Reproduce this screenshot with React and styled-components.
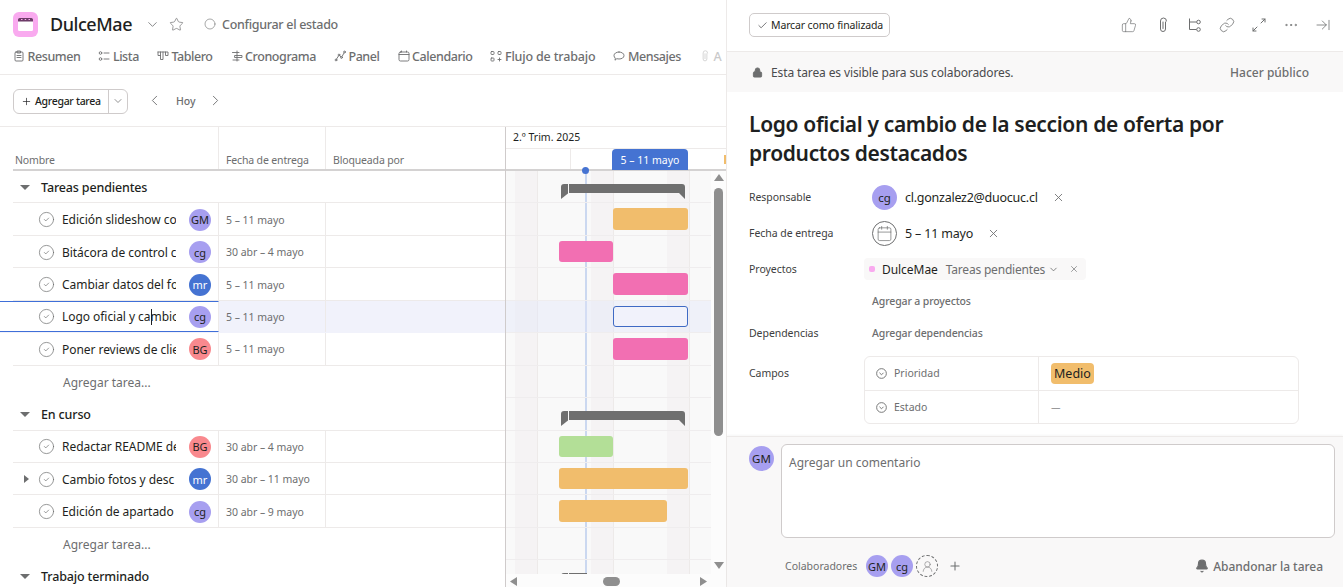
import React from "react"
import styled, { createGlobalStyle } from "styled-components"
import {
  Bell, Calendar, Check, ChevronDown, ChevronLeft, ChevronRight, CircleCheck, Ellipsis,
  Link, Lock, Plus, Star, ThumbsUp, UserRound, X, ArrowRightToLine, Circle,
} from "lucide-react"

const GlobalStyle = createGlobalStyle`
  html, body { margin: 0; padding: 0; height: 100%; overflow: hidden; background: #fff; }
  body { font-family: "Noto Sans", "Open Sans", sans-serif; color: #1e1f21; }
  * { box-sizing: border-box; }
`

const ROW = 32.45
const muted = "#6d6e6f"
const line = "#edeae9"
const orange = "#f1bd6c"
const pink = "#f26fb2"
const green = "#b3df97"
const blue = "#4573d2"

const Page = styled.div`
  display: flex;
  width: 1343px;
  height: 587px;
  overflow: hidden;
`
const LeftPane = styled.div`
  width: 727px;
  flex: none;
  display: flex;
  flex-direction: column;
  border-right: 1px solid ${line};
  overflow: hidden;
`
const Header = styled.header`
  height: 75px;
  flex: none;
  border-bottom: 1px solid ${line};
  padding: 11px 0 0 13px;
`
const TitleRow = styled.div`
  display: flex;
  align-items: center;
  height: 26px;
`
const Logo = styled.div`
  width: 25px;
  height: 25px;
  border-radius: 6px;
  background: #f9aaef;
  display: flex;
  align-items: center;
  justify-content: center;
  margin-right: 12px;
`
const ProjectName = styled.h1`
  margin: 0 13px 0 0;
  font-size: 18px;
  font-weight: 500;
  letter-spacing: -0.45px;
  width: 82px;
  white-space: nowrap;
`
const HeadIcon = styled.span`
  display: flex;
  color: ${muted};
  margin-right: ${(p) => p.$gap}px;
`
const StatusText = styled.span`
  font-size: 12.5px;
  font-weight: 500;
  letter-spacing: -0.3px;
  color: ${muted};
`
const Tabs = styled.nav`
  display: flex;
  gap: 18px;
  margin-top: 7px;
  height: 24px;
  align-items: center;
  white-space: nowrap;
`
const Tab = styled.span`
  display: flex;
  align-items: center;
  gap: 2.5px;
  font-size: 12.5px;
  font-weight: 500;
  letter-spacing: ${(p) => (p.$wide ? -0.17 : -0.42)}px;
  color: ${(p) => (p.$faded ? "#c9c9ca" : muted)};
  svg { flex: none; }
`
const Toolbar = styled.div`
  height: 52px;
  flex: none;
  border-bottom: 1px solid ${line};
  display: flex;
  align-items: center;
  padding: 0 0 0 13px;
`
const SplitButton = styled.div`
  display: flex;
  height: 25px;
  width: 115px;
  border: 1px solid #cfcbcb;
  border-radius: 6px;
  margin-right: 18px;
  margin-top: 1px;
`
const SplitMain = styled.div`
  width: 95px;
  display: flex;
  align-items: center;
  gap: 3px;
  padding-left: 7px;
  font-size: 10.5px;
  font-weight: 500;
  letter-spacing: -0.3px;
  white-space: nowrap;
  border-right: 1px solid #cfcbcb;
`
const SplitSide = styled.div`
  flex: 1;
  display: flex;
  align-items: center;
  justify-content: center;
  color: ${muted};
`
const TodayText = styled.span`
  font-size: 10.5px;
  font-weight: 500;
  color: ${muted};
  margin: 0 11px 0 13px;
`
const Grid = styled.div`
  flex: 1;
  display: flex;
  min-height: 0;
`
const TablePane = styled.div`
  width: 506px;
  flex: none;
  border-right: 1px solid #cfcbcb;
  overflow: hidden;
`
const TableHead = styled.div`
  height: 44px;
  margin-left: 13px;
  display: grid;
  grid-template-columns: 206px 107px 1fr;
  border-bottom: 2px solid #d4d2d2;
`
const HeadCell = styled.div`
  padding: 0 0 2px ${(p) => p.$pad}px;
  display: flex;
  align-items: flex-end;
  font-size: 10.5px;
  letter-spacing: -0.15px;
  color: ${muted};
  border-right: ${(p) => (p.$last ? "none" : `1px solid ${line}`)};
`
const Section = styled.div`
  height: ${ROW}px;
  margin-left: 13px;
  display: flex;
  align-items: center;
  gap: 11px;
  padding: 1px 0 0 7px;
  font-size: 12.5px;
  font-weight: 500;
  letter-spacing: -0.15px;
  border-bottom: 1px solid ${(p) => (p.$open ? line : "transparent")};
`
const Caret = styled.span`
  width: 0;
  height: 0;
  border-left: 5px solid transparent;
  border-right: 5px solid transparent;
  border-top: 5px solid #6d6e6f;
`
const AddRow = styled.div`
  height: ${ROW}px;
  padding: 1px 0 0 63px;
  display: flex;
  align-items: center;
  font-size: 12px;
  color: ${muted};
`
const TaskRow = styled.div`
  height: ${ROW}px;
  display: grid;
  grid-template-columns: ${(p) => (p.$active ? 219 : 206)}px 107px 1fr;
  border-bottom: 1px solid ${(p) => (p.$active ? "transparent" : line)};
  margin-left: ${(p) => (p.$active ? 0 : 13)}px;
  ${(p) => (p.$active ? "background: #f1f2fb;" : "")}
`
const NameCell = styled.div`
  display: flex;
  align-items: center;
  position: relative;
  padding: 1px 0 0 ${(p) => (p.$active ? 38 : 25)}px;
  border-right: 1px solid ${line};
  ${(p) => (p.$active ? `background: #fff; border-top: 1px solid #3f6fd8; border-bottom: 1px solid #3f6fd8;` : "")}
`
const Expander = styled.span`
  position: absolute;
  left: 11px;
  top: 12px;
  width: 0;
  height: 0;
  border-top: 4.5px solid transparent;
  border-bottom: 4.5px solid transparent;
  border-left: 5px solid #6d6e6f;
`
const TaskName = styled.span`
  width: 114px;
  margin-left: 7px;
  font-size: 12px;
  letter-spacing: -0.05px;
  white-space: nowrap;
  overflow: hidden;
  flex: none;
  position: relative;
`
const TextCursor = styled.i`
  position: absolute;
  left: 89px;
  top: 1px;
  width: 1px;
  height: 16px;
  background: #1e1f21;
`
const Avatar = styled.span`
  width: ${(p) => p.$size}px;
  height: ${(p) => p.$size}px;
  flex: none;
  border-radius: 50%;
  display: flex;
  align-items: center;
  justify-content: center;
  font-size: ${(p) => p.$font}px;
  background: ${(p) => p.$bg};
  color: ${(p) => p.$fg};
`
const RowAvatar = styled(Avatar)`
  margin-left: 13px;
`
const DateCell = styled.div`
  display: flex;
  align-items: center;
  padding: 1px 0 0 7px;
  font-size: 10.5px;
  letter-spacing: -0.03px;
  color: ${muted};
  border-right: 1px solid ${line};
  white-space: nowrap;
`
const Gantt = styled.div`
  flex: 1;
  position: relative;
  overflow: hidden;
`
const GanttHead = styled.div`
  height: 44px;
  border-bottom: 2px solid #d4d2d2;
`
const Quarter = styled.div`
  height: 22px;
  padding: 3px 0 0 7px;
  font-size: 10.5px;
  color: #1e1f21;
  border-bottom: 1px solid ${line};
`
const Weeks = styled.div`
  height: 20px;
  position: relative;
`
const WeekTick = styled.i`
  position: absolute;
  left: 64px;
  top: 0;
  height: 100%;
  width: 1px;
  background: ${line};
`
const ThisWeek = styled.div`
  position: absolute;
  left: 106px;
  top: 0;
  width: 76px;
  height: 21px;
  border-radius: 4px 4px 0 0;
  background: ${blue};
  color: #fff;
  font-size: 10.5px;
  display: flex;
  align-items: center;
  justify-content: center;
`
const NextWeek = styled.i`
  position: absolute;
  left: 218px;
  top: 6px;
  width: 2px;
  height: 9px;
  background: ${orange};
`
const Canvas = styled.div`
  position: relative;
  width: 206px;
  height: 403px;
  overflow: hidden;
  background: #f9f9f9;
`
const Weekend = styled.i`
  position: absolute;
  top: 0;
  bottom: 0;
  left: ${(p) => p.$left}px;
  width: 23px;
  background: #f5f3f4;
  border-right: 1px solid ${line};
`
const TodayLine = styled.i`
  position: absolute;
  top: 0;
  bottom: 0;
  left: 79px;
  width: 2px;
  background: #cbd8f0;
`
const Lane = styled.div`
  position: relative;
  height: ${ROW}px;
  border-bottom: 1px solid #efedee;
  ${(p) => (p.$active ? "background: rgba(225, 229, 250, .4);" : "")}
`
const Bar = styled.div`
  position: absolute;
  left: ${(p) => p.$left}px;
  width: ${(p) => p.$width}px;
  top: 5px;
  height: 21.5px;
  border-radius: 3px;
  background: ${(p) => p.$color};
  ${(p) => (p.$outline ? `border: 1px solid #3f6ac4;` : "")}
`
const Bracket = styled.svg`
  position: absolute;
  left: 55px;
  top: 13px;
`
const TodayDot = styled.i`
  position: absolute;
  left: 76px;
  top: 40px;
  width: 7px;
  height: 7px;
  border-radius: 50%;
  background: ${blue};
`
const VScroll = styled.div`
  position: absolute;
  right: 0;
  top: 44px;
  bottom: 0;
  width: 15px;
  background: #fcfcfc;
`
const HScroll = styled.div`
  position: absolute;
  left: 0;
  right: 0;
  bottom: 0;
  height: 13px;
  background: #fcfcfc;
`
const VThumb = styled.i`
  position: absolute;
  left: 3px;
  top: 17px;
  width: 9px;
  height: 248px;
  border-radius: 5px;
  background: #8f8f8f;
`
const HThumb = styled.i`
  position: absolute;
  left: 97px;
  top: 3px;
  width: 17px;
  height: 9px;
  border-radius: 5px;
  background: #8f8f8f;
`
const Arrow = styled.svg`
  position: absolute;
  left: ${(p) => p.$x}px;
  top: ${(p) => p.$y}px;
  fill: #8f8f8f;
`

const RightPane = styled.aside`
  flex: 1;
  display: flex;
  flex-direction: column;
  min-width: 0;
`
const TaskBar = styled.div`
  height: 52px;
  flex: none;
  display: flex;
  align-items: center;
  padding: 0 12px 1px 22px;
  border-bottom: 1px solid ${line};
`
const DoneButton = styled.div`
  width: 141px;
  height: 24px;
  border: 1px solid #cfcbcb;
  border-radius: 5px;
  display: flex;
  align-items: center;
  gap: 3px;
  padding-left: 7px;
  font-size: 10.5px;
  letter-spacing: -0.14px;
  white-space: nowrap;
  margin-right: auto;
`
const ActionIcons = styled.div`
  display: flex;
  align-items: center;
  gap: 16px;
  color: ${muted};
`
const LikeIcon = styled(ThumbsUp)`
  margin-right: 2px;
`
const Notice = styled.div`
  height: 40px;
  flex: none;
  background: #f9f8f8;
  display: flex;
  align-items: center;
  padding: 0 34px 0 25px;
  font-size: 12px;
  color: #4a4b4d;
  gap: 8px;
  letter-spacing: -0.12px;
`
const NoticeAction = styled.span`
  margin-left: auto;
  font-size: 12px;
  font-weight: 500;
  letter-spacing: 0;
  color: ${muted};
`
const Detail = styled.div`
  flex: 1;
  min-height: 0;
  padding: 18px 0 0 22px;
`
const TaskTitle = styled.h2`
  margin: 0 0 11px;
  font-size: 21px;
  line-height: 29px;
  font-weight: 600;
  letter-spacing: -0.34px;
`
const Field = styled.div`
  display: grid;
  grid-template-columns: 115px 1fr;
  align-items: ${(p) => (p.$top ? "start" : "center")};
  height: ${(p) => p.$h}px;
  margin-top: ${(p) => p.$top || 0}px;
`
const FieldLabel = styled.div`
  font-size: 10.5px;
  color: #3d3e40;
  letter-spacing: -0.05px;
  padding-top: ${(p) => p.$top || 0}px;
`
const FieldValue = styled.div`
  display: flex;
  align-items: center;
  font-size: 12.5px;
  padding-left: ${(p) => p.$pad ?? 8}px;
  letter-spacing: -0.17px;
  white-space: nowrap;
`
const Email = styled.span`
  margin-left: 8px;
  letter-spacing: -0.25px;
`
const Remove = styled.span`
  display: flex;
  color: ${muted};
  margin-left: ${(p) => p.$gap}px;
`
const DateBadge = styled.span`
  width: 25px;
  height: 25px;
  border-radius: 50%;
  border: 1px solid #6d6e6f;
  color: ${muted};
  display: flex;
  align-items: center;
  justify-content: center;
  margin-right: 8px;
`
const ProjectChip = styled.div`
  width: 222px;
  height: 22px;
  border-radius: 4px;
  background: #f9f8f8;
  display: flex;
  align-items: center;
  padding-left: 5px;
  font-size: 12px;
  letter-spacing: -0.05px;
`
const ChipDot = styled.i`
  width: 6px;
  height: 6px;
  border-radius: 2px;
  background: #f9aaef;
  margin-right: 7px;
`
const ChipSection = styled.span`
  color: ${muted};
  margin: 0 3px 0 8px;
  letter-spacing: -0.2px;
`
const AddLink = styled.span`
  font-size: 10.5px;
  font-weight: 500;
  color: ${muted};
  letter-spacing: -0.13px;
`
const Fields = styled.div`
  width: 435px;
  height: 68px;
  border: 1px solid ${line};
  border-radius: 6px;
`
const FieldsRow = styled.div`
  display: grid;
  grid-template-columns: 174px 1fr;
  height: 33.5px;
  ${(p) => (p.$last ? "" : `border-bottom: 1px solid ${line};`)}
`
const FieldsName = styled.div`
  display: flex;
  align-items: center;
  gap: 7px;
  padding-left: 11px;
  font-size: 10.5px;
  color: ${muted};
  border-right: 1px solid ${line};
`
const FieldsValue = styled.div`
  display: flex;
  align-items: center;
  padding-left: 12px;
  font-size: 9.5px;
  color: #4a4b4d;
`
const Pill = styled.span`
  background: ${orange};
  border-radius: 4px;
  height: 21px;
  padding: 0 3px;
  display: flex;
  align-items: center;
  font-size: 12.5px;
  color: #1e1f21;
`
const Composer = styled.div`
  height: 151px;
  flex: none;
  background: #f9f8f8;
  border-top: 1px solid ${line};
  box-shadow: 0 -1px 2px rgba(0, 0, 0, .04);
  padding: 7px 8px 0 22px;
`
const CommentRow = styled.div`
  display: flex;
  gap: 7px;
`
const CommentAvatar = styled(Avatar)`
  margin-top: 2px;
`
const CommentBox = styled.div`
  flex: 1;
  height: 94px;
  background: #fff;
  border: 1px solid #cfcbcb;
  border-radius: 6px;
  padding: 9px 7px;
  font-size: 12px;
  color: ${muted};
`
const Collaborators = styled.div`
  display: flex;
  align-items: center;
  height: 22px;
  margin-top: 17px;
  padding: 0 4px 0 36px;
  gap: 3px;
`
const CollabLabel = styled.span`
  font-size: 10.5px;
  color: ${muted};
  width: 78px;
  white-space: nowrap;
`
const AddCollab = styled.span`
  width: 22px;
  height: 22px;
  border-radius: 50%;
  border: 1px dashed #6d6e6f;
  display: flex;
  align-items: center;
  justify-content: center;
  color: ${muted};
`
const PlusWrap = styled.span`
  display: flex;
  color: ${muted};
  margin-left: 7px;
`
const LeaveTask = styled.span`
  margin-left: auto;
  margin-right: 8px;
  display: flex;
  align-items: center;
  gap: 4px;
  font-size: 12px;
  font-weight: 500;
  color: ${muted};
  letter-spacing: -0.03px;
`

const people = {
  GM: { bg: "#a79ff0", fg: "#1e1f21" },
  cg: { bg: "#a79ff0", fg: "#1e1f21" },
  mr: { bg: "#4573d2", fg: "#ffffff" },
  BG: { bg: "#f9898e", fg: "#1e1f21" },
}

const sections = [
  {
    name: "Tareas pendientes",
    tasks: [
      { name: "Edición slideshow co", who: "GM", date: "5 – 11 mayo", left: 107, width: 75, color: orange },
      { name: "Bitácora de control c", who: "cg", date: "30 abr – 4 mayo", left: 53, width: 54, color: pink },
      { name: "Cambiar datos del fo", who: "mr", date: "5 – 11 mayo", left: 107, width: 75, color: pink },
      { name: "Logo oficial y cambio", who: "cg", date: "5 – 11 mayo", left: 107, width: 75, color: "#f1f2fb", active: true },
      { name: "Poner reviews de clie", who: "BG", date: "5 – 11 mayo", left: 107, width: 75, color: pink },
    ],
  },
  {
    name: "En curso",
    tasks: [
      { name: "Redactar README de", who: "BG", date: "30 abr – 4 mayo", left: 53, width: 54, color: green },
      { name: "Cambio fotos y desc", who: "mr", date: "30 abr – 11 mayo", left: 53, width: 129, color: orange, sub: true },
      { name: "Edición de apartado", who: "cg", date: "30 abr – 9 mayo", left: 53, width: 108, color: orange },
    ],
  },
]

const Ico = ({ children, s = 12, w = 0.9 }) => (
  <svg width={s} height={s} viewBox="0 0 12 12" fill="none" stroke="currentColor" strokeWidth={w} strokeLinecap="round" strokeLinejoin="round">
    {children}
  </svg>
)

// the tab icons are not in the packages, so they are drawn on a 12px grid
const tabs = [
  ["Resumen", <><rect x="2" y="2" width="8" height="9" rx="1" /><path d="M4.500 1h3v2h-3zM4 5.500h4M4 7.500h4" /></>],
  ["Lista", <><circle cx="2.500" cy="3" r="1.300" /><circle cx="2.500" cy="9" r="1.300" /><path d="M6 3h5M6 9h5" /></>],
  ["Tablero", <path d="M1 2h10v3.500H8.500v-3.500M1 2v3.500h2.500M3.500 2v7.500h2.500V2" />],
  ["Cronograma", <path d="M6 1v10M1.500 2.500h6.500M4 5.500h7v2H4zM2 10h6" />],
  ["Panel", <><circle cx="2" cy="10" r=".9" /><circle cx="5" cy="5" r=".9" /><circle cx="7.500" cy="7.500" r=".9" /><circle cx="10.500" cy="2" r=".9" /><path d="M2.500 9l2-3M5.700 5.700l1.100 1.100M8 6.600l2-3.600" /></>],
  ["Calendario", <><rect x="1" y="2" width="10" height="9" rx="1.500" /><path d="M1 4.500h10M3.500 1v1M8.500 1v1" /></>],
  ["Flujo de trabajo", <><rect x="1" y="1.500" width="3" height="3" rx=".7" /><rect x="8" y="1.500" width="3" height="3" rx=".7" /><rect x="1" y="8" width="3" height="3" rx=".7" /><path d="M8 9.500h3M9.500 8v3" /></>],
  ["Mensajes", <path d="M6 2c2.800 0 5 1.500 5 3.600S8.800 9 6 9c-.8 0-1.500-.1-2.200-.3L2 10.200l.3-2C1.500 7.500 1 6.600 1 5.600 1 3.500 3.200 2 6 2z" />],
]

const ClipIcon = ({ size = 16 }) => (
  <svg width={size} height={size} viewBox="0 0 16 16" fill="none" stroke="currentColor" strokeWidth="1" strokeLinecap="round">
    <path d="M10.500 5v7a2.500 2.500 0 0 1-5 0V4a3 3 0 0 1 6 0M8 5v6.500" />
  </svg>
)

const SubtaskIcon = () => (
  <svg width="16" height="16" viewBox="0 0 16 16" fill="none" stroke="currentColor" strokeWidth="1">
    <path d="M2.500 1.500v11h7M2.500 5h7" />
    <circle cx="11.500" cy="5" r="1.800" />
    <circle cx="11.500" cy="12.500" r="1.800" />
  </svg>
)

const ExpandIcon = () => (
  <svg width="16" height="16" viewBox="0 0 16 16" fill="none" stroke="currentColor" strokeWidth="1" strokeLinecap="round">
    <path d="M10 6l4-4M11 2h3v3M6 10l-4 4M2 11v3h3" />
  </svg>
)

const RoundChevron = () => (
  <svg width="11" height="11" viewBox="0 0 12 12" fill="none" stroke={muted} strokeWidth="1">
    <circle cx="6" cy="6" r="5.300" />
    <path d="M3.800 5.200L6 7.400l2.200-2.200" />
  </svg>
)

const SummaryBar = ({ width = 124 }) => (
  <Bracket width={width} height="15" viewBox={`0 0 ${width} 15`}>
    <path d="M0 3a3 3 0 0 1 3-3h4v9.500l-7 5.500z" fill="#6f6f6f" />
    <path d="M8 0h113a3 3 0 0 1 3 3v12l-6-6H8z" fill="#6f6f6f" />
  </Bracket>
)

const TaskCells = ({ task }) => {
  const p = people[task.who]
  return (
    <TaskRow $active={task.active}>
      <NameCell $active={task.active}>
        {task.sub && <Expander />}
        <CircleCheck size={17} strokeWidth={1} color="#6d6e6f" />
        <TaskName>
          {task.name}
          {task.active && <TextCursor />}
        </TaskName>
        <RowAvatar $size={22} $font={11} $bg={p.bg} $fg={p.fg}>{task.who}</RowAvatar>
      </NameCell>
      <DateCell>{task.date}</DateCell>
      <div />
    </TaskRow>
  )
}

const App = () => {
  return (
    <Page>
      <GlobalStyle />
      <LeftPane>
        <Header>
          <TitleRow>
            <Logo>
              <svg width="15" height="13" viewBox="0 0 15 13">
                <rect x="0" y="0" width="15" height="13" rx="1.500" fill="#fff" />
                <path d="M0 1.500a1.500 1.500 0 0 1 1.500-1.500h12a1.500 1.500 0 0 1 1.500 1.500V3.500H0z" fill="#6d3b68" />
                <path d="M3 1.500h1.500M6.700 1.500h1.500M10.500 1.500H12" stroke="#f9aaef" strokeWidth="1" />
              </svg>
            </Logo>
            <ProjectName>DulceMae</ProjectName>
            <HeadIcon $gap={9}><ChevronDown size={15} strokeWidth={1.3} /></HeadIcon>
            <HeadIcon $gap={20}><Star size={15} strokeWidth={1.1} /></HeadIcon>
            <HeadIcon $gap={6}><Circle size={12} strokeWidth={1.2} /></HeadIcon>
            <StatusText>Configurar el estado</StatusText>
          </TitleRow>
          <Tabs>
            {tabs.map(([label, icon]) => (
              <Tab key={label} $wide={label === "Flujo de trabajo"}><Ico>{icon}</Ico>{label}</Tab>
            ))}
            <Tab $faded><ClipIcon size={12} />A</Tab>
          </Tabs>
        </Header>
        <Toolbar>
          <SplitButton>
            <SplitMain><Plus size={11} strokeWidth={1.5} />Agregar tarea</SplitMain>
            <SplitSide><ChevronDown size={12} strokeWidth={1.5} /></SplitSide>
          </SplitButton>
          <HeadIcon $gap={0}><ChevronLeft size={17} strokeWidth={1.3} /></HeadIcon>
          <TodayText>Hoy</TodayText>
          <HeadIcon $gap={0}><ChevronRight size={17} strokeWidth={1.3} /></HeadIcon>
        </Toolbar>
        <Grid>
          <TablePane>
            <TableHead>
              <HeadCell $pad={2}>Nombre</HeadCell>
              <HeadCell $pad={7}>Fecha de entrega</HeadCell>
              <HeadCell $pad={7} $last>Bloqueada por</HeadCell>
            </TableHead>
            {sections.map((s) => (
              <React.Fragment key={s.name}>
                <Section $open><Caret />{s.name}</Section>
                {s.tasks.map((t) => <TaskCells key={t.name} task={t} />)}
                <AddRow>Agregar tarea...</AddRow>
              </React.Fragment>
            ))}
            <Section><Caret />Trabajo terminado</Section>
          </TablePane>
          <Gantt>
            <GanttHead>
              <Quarter>2.º Trim. 2025</Quarter>
              <Weeks>
                <WeekTick />
                <ThisWeek>5 – 11 mayo</ThisWeek>
                <NextWeek />
              </Weeks>
            </GanttHead>
            <Canvas>
              <Weekend $left={9} />
              <Weekend $left={85} />
              <Weekend $left={161} />
              <TodayLine />
              {sections.map((s) => (
                <React.Fragment key={s.name}>
                  <Lane><SummaryBar /></Lane>
                  {s.tasks.map((t) => (
                    <Lane key={t.name} $active={t.active}>
                      <Bar $left={t.left} $width={t.width} $color={t.color} $outline={t.active} />
                    </Lane>
                  ))}
                  <Lane />
                </React.Fragment>
              ))}
              <Lane><SummaryBar width={26} /></Lane>
            </Canvas>
            <TodayDot />
            <HScroll>
              <Arrow $x={4} $y={3} width="8" height="9" viewBox="0 0 8 9"><path d="M7 0v9L0 4.500z" /></Arrow>
              <HThumb />
              <Arrow $x={194} $y={3} width="8" height="9" viewBox="0 0 8 9"><path d="M0 0v9l7-4.500z" /></Arrow>
            </HScroll>
            <VScroll>
              <Arrow $x={3} $y={3} width="10" height="7" viewBox="0 0 10 7"><path d="M0 7h10L5 0z" /></Arrow>
              <VThumb />
              <Arrow $x={3} $y={391} width="10" height="7" viewBox="0 0 10 7"><path d="M0 0h10L5 7z" /></Arrow>
            </VScroll>
          </Gantt>
        </Grid>
      </LeftPane>
      <RightPane>
        <TaskBar>
          <DoneButton><Check size={11} strokeWidth={1.3} />Marcar como finalizada</DoneButton>
          <ActionIcons>
            <LikeIcon size={16} strokeWidth={1} />
            <ClipIcon />
            <SubtaskIcon />
            <Link size={16} strokeWidth={1.2} />
            <ExpandIcon />
            <Ellipsis size={16} strokeWidth={1.2} />
            <ArrowRightToLine size={16} strokeWidth={1.2} />
          </ActionIcons>
        </TaskBar>
        <Notice>
          <Lock size={11} fill="#6d6e6f" color="#6d6e6f" />
          Esta tarea es visible para sus colaboradores.
          <NoticeAction>Hacer público</NoticeAction>
        </Notice>
        <Detail>
          <TaskTitle>Logo oficial y cambio de la seccion de oferta por<br />productos destacados</TaskTitle>
          <Field $h={36}>
            <FieldLabel>Responsable</FieldLabel>
            <FieldValue>
              <Avatar $size={25} $font={11.5} $bg={people.cg.bg} $fg={people.cg.fg}>cg</Avatar>
              <Email>cl.gonzalez2@duocuc.cl</Email>
              <Remove $gap={14}><X size={13} strokeWidth={1.6} /></Remove>
            </FieldValue>
          </Field>
          <Field $h={36}>
            <FieldLabel>Fecha de entrega</FieldLabel>
            <FieldValue>
              <DateBadge><Calendar size={17} strokeWidth={1} /></DateBadge>
              5 – 11 mayo
              <Remove $gap={14}><X size={13} strokeWidth={1.6} /></Remove>
            </FieldValue>
          </Field>
          <Field $h={36}>
            <FieldLabel>Proyectos</FieldLabel>
            <FieldValue $pad={0}>
              <ProjectChip>
                <ChipDot />
                DulceMae
                <ChipSection>Tareas pendientes</ChipSection>
                <ChevronDown size={11} strokeWidth={1.8} color="#6d6e6f" />
                <Remove $gap={10}><X size={10} strokeWidth={1.6} /></Remove>
              </ProjectChip>
            </FieldValue>
          </Field>
          <Field $h={28}>
            <div />
            <FieldValue><AddLink>Agregar a proyectos</AddLink></FieldValue>
          </Field>
          <Field $h={36}>
            <FieldLabel>Dependencias</FieldLabel>
            <FieldValue><AddLink>Agregar dependencias</AddLink></FieldValue>
          </Field>
          <Field $h={68} $top={5}>
            <FieldLabel $top={10}>Campos</FieldLabel>
            <Fields>
              <FieldsRow>
                <FieldsName><RoundChevron />Prioridad</FieldsName>
                <FieldsValue><Pill>Medio</Pill></FieldsValue>
              </FieldsRow>
              <FieldsRow $last>
                <FieldsName><RoundChevron />Estado</FieldsName>
                <FieldsValue>—</FieldsValue>
              </FieldsRow>
            </Fields>
          </Field>
        </Detail>
        <Composer>
          <CommentRow>
            <CommentAvatar $size={25} $font={11.5} $bg={people.GM.bg} $fg={people.GM.fg}>GM</CommentAvatar>
            <CommentBox>Agregar un comentario</CommentBox>
          </CommentRow>
          <Collaborators>
            <CollabLabel>Colaboradores</CollabLabel>
            <Avatar $size={22} $font={11} $bg={people.GM.bg} $fg={people.GM.fg}>GM</Avatar>
            <Avatar $size={22} $font={11} $bg={people.cg.bg} $fg={people.cg.fg}>cg</Avatar>
            <AddCollab><UserRound size={13} strokeWidth={1} /></AddCollab>
            <PlusWrap><Plus size={14} strokeWidth={1.8} /></PlusWrap>
            <LeaveTask><Bell size={14} fill="#6d6e6f" color="#6d6e6f" />Abandonar la tarea</LeaveTask>
          </Collaborators>
        </Composer>
      </RightPane>
    </Page>
  )
}

export default App
